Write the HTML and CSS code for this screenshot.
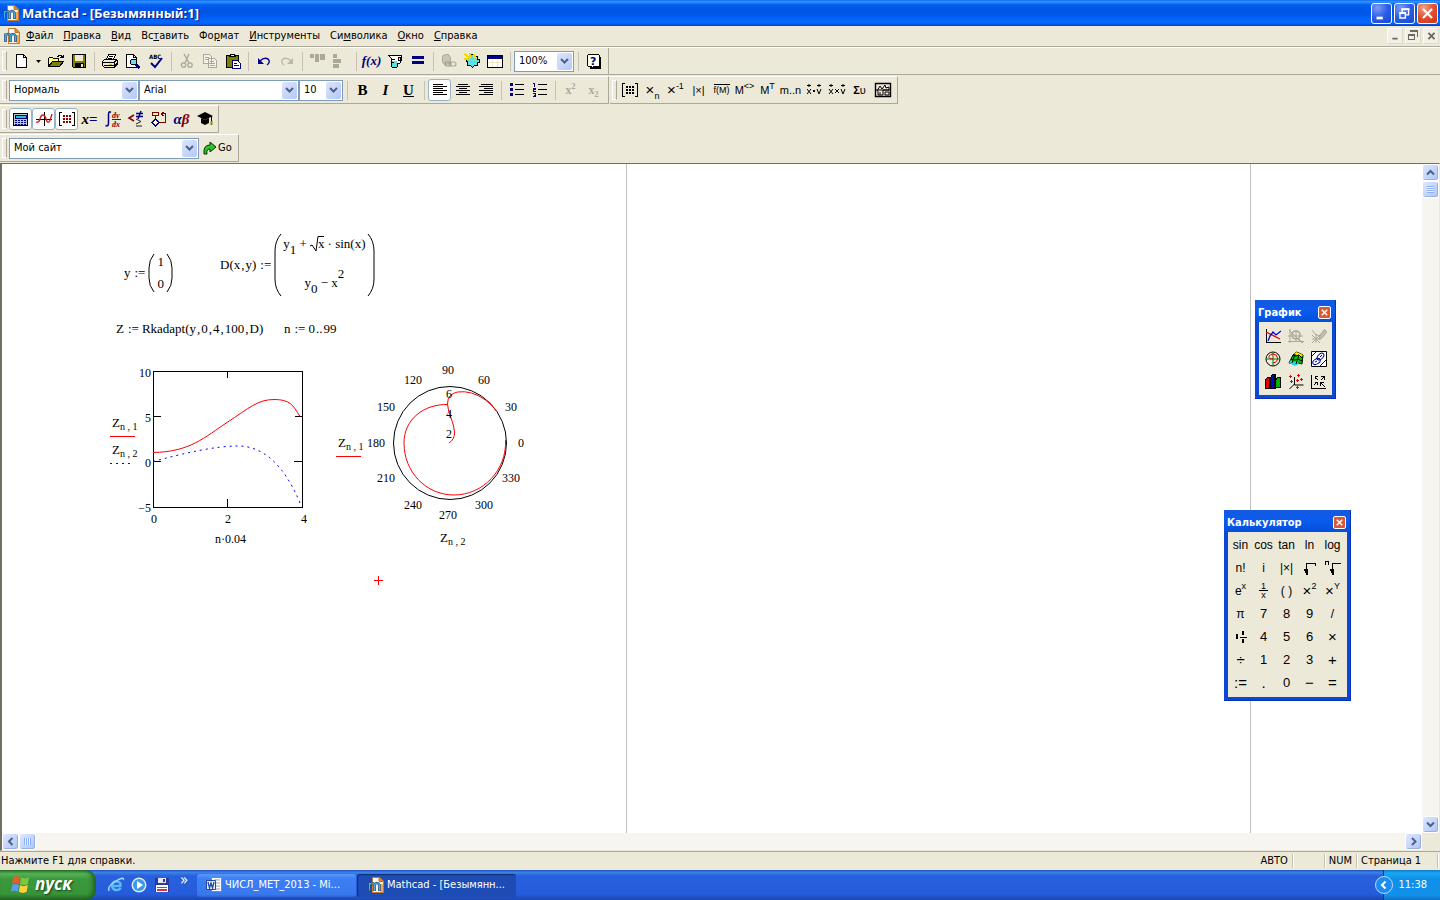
FILE: index.html
```html
<!DOCTYPE html>
<html lang="ru">
<head>
<meta charset="utf-8">
<title>Mathcad - [Безымянный:1]</title>
<link rel="stylesheet" href="styles.css">
</head>
<body>
<svg class="defs" aria-hidden="true">
  <defs>
    <symbol id="mc" viewBox="0 0 16 16">
      <path d="M4.500.5h7l4 3.500v11.500h-11z" fill="#fdf0dc" stroke="#c87830"/>
      <path d="M6 2h5v3H6z" fill="#fff"/>
      <path d="M11 .5v4h4.500z" fill="#f08a28" stroke="#d07018"/>
      <path d="M12.500 7v8h2.500V7z" fill="#f4a850"/>
      <path d="M1.500 14V5.500M1.500 8q1-2 2.500-2t2.500 2v6M6.500 8q1-2 2.500-2t2.500 2v6" fill="none" stroke="#1c4878" stroke-width="2.600"/>
      <path d="M1.500 13.500V6M1.500 8q1-2 2.500-2t2.500 2v5.500M6.500 8q1-2 2.500-2t2.500 2v5.500" fill="none" stroke="#44b0e4" stroke-width="1.200"/>
    </symbol>
    <symbol id="down" viewBox="0 0 9 6"><path d="M1 1l3.500 3.500L8 1" fill="none" stroke="#4d6185" stroke-width="2"/></symbol>
  </defs>
</svg>

<header class="titlebar">
  <svg class="ico"><use href="#mc"/></svg>
  <h1>Mathcad - [Безымянный:1]</h1>
  <div class="winbtns">
    <button class="wb" aria-label="Свернуть"><svg viewBox="0 0 21 21"><path d="M5 14h7v3H5z" fill="#fff"/></svg></button>
    <button class="wb" aria-label="Восстановить"><svg viewBox="0 0 21 21"><path d="M8 9V5.500h7V12h-3M5.500 9.500h6v6h-6z" fill="none" stroke="#fff" stroke-width="1.500"/><path d="M7 5h9v2H7zM5 9h7v2H5z" fill="#fff"/></svg></button>
    <button class="wb red-btn" aria-label="Закрыть"><svg viewBox="0 0 21 21"><path d="M5.500 5.500l10 10M15.500 5.500l-10 10" stroke="#fff" stroke-width="2.400"/></svg></button>
  </div>
</header>

<nav class="menubar">
  <svg class="ico"><use href="#mc"/></svg>
  <button><u>Ф</u>айл</button><button><u>П</u>равка</button><button><u>В</u>ид</button><button>Вс<u>т</u>авить</button><button>Фо<u>р</u>мат</button><button><u>И</u>нструменты</button><button>Си<u>м</u>волика</button><button><u>О</u>кно</button><button><u>С</u>правка</button>
  <div class="mdi">
    <button aria-label="Свернуть окно"><svg viewBox="0 0 16 16"><path d="M5 10h6v2H5z" fill="#6b685c"/></svg></button>
    <button aria-label="Восстановить окно"><svg viewBox="0 0 14 14"><path d="M4 1h8v2H4zM11 3h1v5h-1zM2 5h7v2H2zM2 7h1v4H2zM8 7h1v4H8zM2 10h7v1H2z" fill="#6b685c"/></svg></button>
    <button aria-label="Закрыть окно"><svg viewBox="0 0 16 16"><path d="M5 4.500l7 7M12 4.500l-7 7" stroke="#6b685c" stroke-width="2.200"/></svg></button>
  </div>
</nav>

<section class="bars">
  <div class="row first">
    <div class="bar" role="toolbar" aria-label="Стандартная">
      <button class="tb" aria-label="Создать"><svg class="px" viewBox="0 0 16 16"><path d="M3.500 1.500h7l3 3v10h-10z" fill="#fff" stroke="#000"/><path d="M10.500 1.500v3h3" fill="none" stroke="#000"/></svg></button>
      <button class="tb slim" aria-label="Шаблоны"><svg viewBox="0 0 5 3"><path d="M0 0h5L2.500 3z"/></svg></button>
      <button class="tb" aria-label="Открыть"><svg class="px" viewBox="0 0 16 16"><path d="M.5 13.500V5.500l1-1h3l1 1h5v3" fill="#ffff90" stroke="#000"/><path d="M.5 13.500l4-5h11l-4 5z" fill="#808000" stroke="#000"/><path d="M9 3h1V2h3v1h1v1h1V2M12 4h3" fill="none" stroke="#000"/></svg></button>
      <button class="tb" aria-label="Сохранить"><svg class="px" viewBox="0 0 16 16"><path d="M1.500 1.500h13v13h-12l-1-1z" fill="#808000" stroke="#000"/><path d="M4 2h8v6H4z" fill="#ece9d8"/><path d="M4 10h9v4H4z"/><path d="M10 11h2v3h-2z" fill="#ece9d8"/></svg></button>
      <i class="sep"></i>
      <button class="tb" aria-label="Печать"><svg class="px" viewBox="0 0 16 16"><path d="M4.500 6.500l2-5h7l-2 5" fill="#fff" stroke="#000"/><path d="M7 3.500h4M6 5.500h4" stroke="#000"/><path d="M.5 8.500l2-2h11l2 1v4l-3 3h-10l-2-2z" fill="#ece9d8" stroke="#000"/><path d="M1 9.500h11v4M2 12h10M12 9l3-2M12.500 13l3-3" fill="none" stroke="#000"/><path d="M7 10.500h3v1H7z" fill="#c8c000"/></svg></button>
      <button class="tb" aria-label="Просмотр"><svg class="px" viewBox="0 0 16 16"><path d="M1.500 1.500h7l3 3v10h-10z" fill="#fff" stroke="#000"/><path d="M8.500 1.500v3h3" fill="none" stroke="#000"/><circle cx="8.500" cy="9" r="3" fill="#70e0e8" stroke="#000"/><path d="M10.500 11l4 4" stroke="#000080" stroke-width="2.500"/></svg></button>
      <button class="tb" aria-label="Орфография"><svg viewBox="0 0 16 16"><text x="1" y="6" class="abc">ABC</text><path d="M3 10l4 4 7-9" fill="none" stroke="#000090" stroke-width="2"/></svg></button>
      <i class="sep"></i>
      <button class="tb" aria-label="Вырезать"><svg viewBox="0 0 16 16"><path d="M5 1l5 9M10 1L6 10" fill="none" stroke="#aca899" stroke-width="1.400"/><circle cx="4.500" cy="12" r="2.200" fill="none" stroke="#aca899" stroke-width="1.300"/><circle cx="11" cy="12" r="2.200" fill="none" stroke="#aca899" stroke-width="1.300"/></svg></button>
      <button class="tb" aria-label="Копировать"><svg class="px" viewBox="0 0 16 16"><path d="M1.500 1.500h6l2 2v7h-8zM6.500 5.500h6l2 2v7h-8z" fill="#f4f2e8" stroke="#aca899"/><path d="M3 4.500h4M3 6.500h3M8 8.500h4M8 10.500h5M8 12.500h5" stroke="#aca899"/></svg></button>
      <button class="tb" aria-label="Вставить"><svg class="px" viewBox="0 0 16 16"><path d="M1.500 2.500h12v12h-12z" fill="#808000" stroke="#000"/><path d="M4.500 3.500l1-2h4l1 2z" fill="#ffff60" stroke="#000"/><path d="M7.500 7.500h5l3 3v5h-8z" fill="#fff" stroke="#000080"/><path d="M9 10.500h3M9 12.500h5" stroke="#000080"/></svg></button>
      <i class="sep"></i>
      <button class="tb" aria-label="Отменить"><svg viewBox="0 0 16 16"><path d="M4 8q4-4 8-2 3 3-1 6" fill="none" stroke="#000090" stroke-width="1.400"/><path d="M2 5v6h6z" fill="#000090"/></svg></button>
      <button class="tb" aria-label="Повторить"><svg viewBox="0 0 16 16"><path d="M12 8q-4-4-8-2-3 3 1 6" fill="none" stroke="#bcb8a8" stroke-width="1.400"/><path d="M14 5v6H8z" fill="#bcb8a8"/></svg></button>
      <i class="sep"></i>
      <button class="tb" aria-label="Выровнять по горизонтали"><svg class="px" viewBox="0 0 16 16"><path d="M0 1h4v4H0zM5 1h4v8H5zM10 1h5v6h-5z" fill="#aca899"/></svg></button>
      <button class="tb" aria-label="Выровнять по вертикали"><svg class="px" viewBox="0 0 16 16"><path d="M0 1h4v4H0zM0 6h8v4H0zM0 11h6v4H0z" fill="#aca899"/></svg></button>
      <i class="sep"></i>
      <button class="tb fx">f(x)</button>
      <button class="tb" aria-label="Единицы"><svg class="px" viewBox="0 0 16 16"><path d="M1.500 2.500h13v5l-2 3h-2v3l-1 1h-4l-1-1v-8z" fill="#fff" stroke="#000"/><path d="M5 8h5v6H5z" fill="#60dce4"/><path d="M11 4.500h2v3h-2z" fill="#ece9d8" stroke="#000"/><path d="M5 6.500h3M5 9.500h2" stroke="#000"/></svg></button>
      <button class="tb" aria-label="Вычислить"><svg class="px" viewBox="0 0 16 16"><path d="M2 3h12v3H2zM2 8h12v3H2z" fill="#000080"/></svg></button>
      <i class="sep"></i>
      <button class="tb" aria-label="Гиперссылка"><svg viewBox="0 0 16 16"><path d="M1.500 9V3l3-1.500h3l2 3v6l-6 1z" fill="#c8c5b6" stroke="#aca899"/><rect x="4" y="9" width="6" height="4" rx="2" fill="none" stroke="#9c988a" stroke-width="1.200"/><rect x="8" y="9" width="7" height="4" rx="2" fill="none" stroke="#aca899" stroke-width="1.200"/></svg></button>
      <button class="tb" aria-label="Компонент"><svg class="px" viewBox="0 0 16 16"><path d="M3.500 3.500h3V1.500h4v2h3v3h2v3h-2v3h-3l-2 2-2-2h-3v-3l-1-2z" fill="#60e0e0" stroke="#000"/><path d="M1 1l5 5M6 0v5M0 6h5M10 1v3l3 1" stroke="#f0d800" stroke-width="2" fill="none"/></svg></button>
      <button class="tb" aria-label="Окно формул"><svg class="px" viewBox="0 0 16 16"><path d="M.5 2.500h15v12H.5z" fill="#fff" stroke="#000"/><path d="M1 3h14v3H1z" fill="#000080"/><path d="M5.500 7v7M10.500 7v7M2 9.500h12" stroke="#f0e4b8"/></svg></button>
      <i class="sep"></i>
      <div class="combo w60"><input aria-label="Масштаб" value="100%"><button aria-label="Список масштабов"><svg><use href="#down"/></svg></button></div>
      <i class="sep"></i>
      <button class="tb" aria-label="Справка"><svg class="px" viewBox="0 0 16 16"><path d="M4 15h10V4" fill="none" stroke="#000" stroke-width="2"/><path d="M1.500 2.500l1-1h10l1 1v11h-6l-2 2v-2h-3l-1-1z" fill="#fffff0" stroke="#000"/><text x="4" y="12" class="q">?</text></svg></button>
    </div>
  </div>

  <div class="row second">
    <div class="bar" role="toolbar" aria-label="Форматирование">
      <div class="combo w130"><input aria-label="Стиль" value="Нормаль"><button aria-label="Список стилей"><svg><use href="#down"/></svg></button></div>
      <div class="combo w160"><input aria-label="Шрифт" value="Arial"><button aria-label="Список шрифтов"><svg><use href="#down"/></svg></button></div>
      <div class="combo w44"><input aria-label="Размер" value="10"><button aria-label="Список размеров"><svg><use href="#down"/></svg></button></div>
      <i class="sep"></i>
      <button class="tb serif"><b>B</b></button>
      <button class="tb serif"><b><em>I</em></b></button>
      <button class="tb serif"><b><u>U</u></b></button>
      <i class="sep"></i>
      <button class="tb on" aria-label="По левому краю"><svg class="px" viewBox="0 0 16 16"><path d="M1 2.500h10M1 4.500h14M1 6.500h10M1 8.500h14M1 10.500h10M1 12.500h14" stroke="#000"/></svg></button>
      <button class="tb" aria-label="По центру"><svg class="px" viewBox="0 0 16 16"><path d="M3 2.500h10M1 4.500h14M4 6.500h8M1 8.500h14M4 10.500h8M1 12.500h14" stroke="#000"/></svg></button>
      <button class="tb" aria-label="По правому краю"><svg class="px" viewBox="0 0 16 16"><path d="M3 2.500h12M1 4.500h14M6 6.500h9M1 8.500h14M6 10.500h9M1 12.500h14" stroke="#000"/></svg></button>
      <i class="sep"></i>
      <button class="tb" aria-label="Маркеры"><svg class="px" viewBox="0 0 16 16"><path d="M1 1h3v3H1zM1 6h3v3H1zM1 11h3v3H1z" fill="#000080"/><path d="M6 2.500h9M6 7.500h9M6 12.500h9" stroke="#000"/></svg></button>
      <button class="tb" aria-label="Нумерация"><svg class="px" viewBox="0 0 16 16"><path d="M1 1.500h1.500V5M1 6.500h2v1H1.500v1.500H4M1 11.500h2v3H1M1.500 13H3" fill="none" stroke="#000080"/><path d="M6 2.500h9M6 7.500h9M6 12.500h9" stroke="#000"/></svg></button>
      <i class="sep"></i>
      <button class="tb serif dim"><b>x<sup>2</sup></b></button>
      <button class="tb serif dim"><b>x<sub>2</sub></b></button>
    </div>
    <div class="bar matrix" role="toolbar" aria-label="Матрица">
      <button class="tb" aria-label="Матрица"><svg class="px" viewBox="0 0 16 16"><path d="M3 1.500H.5v13H3M13 1.500h2.500v13H13" fill="none" stroke="#000"/><path d="M4 4h2v2H4zM7 4h2v2H7zM10 4h2v2h-2zM4 7h2v2H4zM7 7h2v2H7zM10 7h2v2h-2zM4 10h2v2H4zM7 10h2v2H7zM10 10h2v2h-2z"/></svg></button>
      <button class="tb sm"><span class="x">×<sub>n</sub></span></button>
      <button class="tb sm"><span class="x">×<sup>-1</sup></span></button>
      <button class="tb sm"><span>|×|</span></button>
      <button class="tb sm"><span class="vec">f(M)</span></button>
      <button class="tb sm"><span>M<sup>&lt;&gt;</sup></span></button>
      <button class="tb sm"><span>M<sup>T</sup></span></button>
      <button class="tb sm">m..n</button>
      <button class="tb sm" aria-label="Скалярное произведение"><svg viewBox="0 0 16 16"><path d="M1 3.500h4M3 2v3M11 3.500h4M13 2v3M1 7l4 5M5 7l-4 5M11 7l2 5 2-5" fill="none" stroke="#000"/><path d="M7 8h2v2H7z"/></svg></button>
      <button class="tb sm" aria-label="Векторное произведение"><svg viewBox="0 0 16 16"><path d="M0 3.500h4M2 2v3M12 3.500h4M14 2v3M0 7l4 5M4 7l-4 5M12 7l2 5 2-5M6 7l4 4M10 7l-4 4" fill="none" stroke="#000"/></svg></button>
      <button class="tb sm"><b>Σ</b>υ</button>
      <button class="tb" aria-label="Изображение"><svg viewBox="0 0 16 16"><path d="M.5 1.500h15v13H.5z" fill="#f6e8e0" stroke="#000" stroke-width="1.400"/><path d="M2 9l3-5 2 3 3-4 1 3 3-1v3H8v5H3V9M10 10h4v3h-4zM5 10v3M1 8h14" fill="none" stroke="#000"/></svg></button>
    </div>
  </div>

  <div class="row">
    <div class="bar" role="toolbar" aria-label="Математика">
      <button class="tb on" aria-label="Калькулятор"><svg class="px" viewBox="0 0 16 16"><path d="M.5 2.500h14v12H.5z" fill="#b8c8d8" stroke="#000" stroke-width="1.500"/><path d="M2 4h11v3H2z" fill="#28c0c8" stroke="#000080"/><path d="M2 9.500h12M2 11.500h12M2 13.500h12" stroke="#000080" stroke-dasharray="2 1"/></svg></button>
      <button class="tb on" aria-label="График"><svg viewBox="0 0 16 16"><path d="M8.500 1v14M0 8.500h16" stroke="#000"/><path d="M0 11q3 1 4-3t3-4q2 0 3 4t3 3q1-1 3-8" fill="none" stroke="#e01010" stroke-width="1.300"/></svg></button>
      <button class="tb on" aria-label="Матрицы"><svg class="px" viewBox="0 0 16 16"><path d="M3 1.500H.5v13H3M13 1.500h2.500v13H13" fill="none" stroke="#000"/><path d="M4 4h2v2H4zM7 4h2v2H7zM10 4h2v2h-2zM4 7h2v2H4zM7 7h2v2H7zM10 7h2v2h-2zM4 10h2v2H4zM7 10h2v2H7zM10 10h2v2h-2z" fill="#800000"/></svg></button>
      <button class="tb serif eqn"><b><em>x</em><span>=</span></b></button>
      <button class="tb" aria-label="Исчисление"><svg viewBox="0 0 16 16"><path d="M6 1.500Q3.500-.5 3.500 4v8q0 4-3 2.500" fill="none" stroke="#000080" stroke-width="1.500"/><text x="7" y="7" class="dd">dy</text><path d="M7 8.500h9" stroke="#800000"/><text x="7" y="16" class="dd">dx</text></svg></button>
      <button class="tb" aria-label="Булева"><svg viewBox="0 0 16 16"><path d="M6 4L1 7l5 3" fill="none" stroke="#800000" stroke-width="1.500"/><path d="M8 2.500h7M8 5.500h7M13 0l-3 8" stroke="#000080" stroke-width="1.500"/><path d="M8 8l5 2.500L8 13M8 15h6" fill="none" stroke="#222"/></svg></button>
      <button class="tb" aria-label="Программирование"><svg class="px" viewBox="0 0 16 16"><path d="M1.500 1.500h6v3h-6z" fill="#fff8a0" stroke="#800000"/><path d="M4.500 5v3M8 11.500h6.500v-9H11M13 1l-3 2 3 2" fill="none" stroke="#800000"/><path d="M4.500 8l3.500 3.500L4.500 15 1 11.500z" fill="#ffffb0" stroke="#000080"/></svg></button>
      <button class="tb serif greek"><b><em><span>α</span>β</em></b></button>
      <button class="tb" aria-label="Символы"><svg viewBox="0 0 16 16"><path d="M0 5l8-4 8 4-8 4z"/><path d="M4 7v5l4 2 4-2V7L8 9z"/><path d="M14.500 5v6" stroke="#000"/><path d="M13.500 10h2v4h-2z" fill="#908800"/></svg></button>
    </div>
  </div>

  <div class="row">
    <div class="bar" role="toolbar" aria-label="Ресурсы">
      <div class="combo w190"><input aria-label="Адрес" value="Мой сайт"><button aria-label="Список адресов"><svg><use href="#down"/></svg></button></div>
      <button class="go"><svg class="ico14" viewBox="0 0 14 14"><path d="M1 13Q0 4 7 4V1l6 5-6 5V8Q3 8 4 13z" fill="#28c828" stroke="#083008"/></svg>Go</button>
    </div>
  </div>
</section>

<main class="work">
  <div class="sheet">
    <div class="pagebreak one"></div>
    <div class="pagebreak two"></div>

    <div class="math m-y">
      <span>y</span><span class="def">:=</span>
      <svg class="par" width="7" height="38"><path d="M6 0Q1 6 1 14v10q0 8 5 14"/></svg>
      <span class="col"><span>1</span><span>0</span></span>
      <svg class="par" width="7" height="38"><path d="M1 0q5 6 5 14v10q0 8-5 14"/></svg>
    </div>

    <div class="math m-d">
      <span>D(x<i class="c">,</i>y)</span><span class="def">:=</span>
      <svg class="par" width="8" height="62"><path d="M7 0Q1 7 1 17v28q0 10 6 17"/></svg>
      <span class="col big">
        <span>y<sub>1</sub> + <svg class="root" width="14" height="16"><path d="M0 10l2-1 4 6L8 .5h6" /></svg><i class="rad">x</i>· sin(x)</span>
        <span>y<sub>0</sub> − x<sup>2</sup></span>
      </span>
      <svg class="par" width="8" height="62"><path d="M1 0q6 7 6 17v28q0 10-6 17"/></svg>
    </div>

    <div class="math m-z"><span>Z</span><span class="def">:=</span><span>Rkadapt(y<i class="c">,</i>0<i class="c">,</i>4<i class="c">,</i>100<i class="c">,</i>D)</span></div>
    <div class="math m-n"><span>n</span><span class="def">:=</span><span>0<i class="c">..</i>99</span></div>

    <svg class="plot xy" viewBox="106 364 210 190" role="img" aria-label="График Z">
      <path class="frame px" d="M153.500 371.500h149v136h-149z"/>
      <path class="frame px" d="M227.500 371v7M227.500 507v-8M153 416.500h8M303 416.500h-8M153 461.500h8M303 461.500h-9"/>
      <path class="red" d="M153 452.500C190 452 205 437 227 422.500S258 399.500 274 399.500S293 405 300 416.500"/>
      <path class="blue" d="M153 461.500C185 453 215 446 238 446S283 462 300 503"/>
      <text x="151" y="377" text-anchor="end">10</text>
      <text x="151" y="422" text-anchor="end">5</text>
      <text x="151" y="467" text-anchor="end">0</text>
      <text x="151" y="512" text-anchor="end">−5</text>
      <text x="151" y="523">0</text>
      <text x="225" y="523">2</text>
      <text x="301" y="523">4</text>
      <text x="215" y="543">n·0.04</text>
      <text class="z" x="112" y="427">Z<tspan class="sub" dy="3">n , 1</tspan></text>
      <path class="red px" d="M110 436.500h25"/>
      <text class="z" x="112" y="454">Z<tspan class="sub" dy="3">n , 2</tspan></text>
      <path class="blue px" d="M110 463.500h21"/>
    </svg>

    <svg class="plot polar" viewBox="334 360 200 194" role="img" aria-label="Полярный график">
      <circle class="frame" cx="450" cy="443" r="56.500"/>
      <path class="red" d="M449 443q6-4 5.500-11t-3.500-14-3.500-14q0-10 10-12 14-2 28 8 6 4 11 11M505.500 440C507 470 483 495 454 495C426 495 404 472 404 443C404 419 424 404 448 404.500"/>
      <text x="448" y="374" text-anchor="middle">90</text>
      <text x="484" y="384" text-anchor="middle">60</text>
      <text x="511" y="411" text-anchor="middle">30</text>
      <text x="521" y="447" text-anchor="middle">0</text>
      <text x="511" y="482" text-anchor="middle">330</text>
      <text x="484" y="509" text-anchor="middle">300</text>
      <text x="448" y="519" text-anchor="middle">270</text>
      <text x="413" y="509" text-anchor="middle">240</text>
      <text x="386" y="482" text-anchor="middle">210</text>
      <text x="376" y="447" text-anchor="middle">180</text>
      <text x="386" y="411" text-anchor="middle">150</text>
      <text x="413" y="384" text-anchor="middle">120</text>
      <text x="449" y="398" text-anchor="middle">6</text>
      <text x="449" y="418" text-anchor="middle">4</text>
      <text x="449" y="438" text-anchor="middle">2</text>
      <text class="z" x="338" y="447">Z<tspan class="sub" dy="3">n , 1</tspan></text>
      <path class="red px" d="M336 456.500h25"/>
      <text class="z" x="440" y="542">Z<tspan class="sub" dy="3">n , 2</tspan></text>
    </svg>

    <svg class="cross px" viewBox="0 0 9 9"><path d="M4.500 0v9M0 4.500h9" stroke="#f00"/></svg>
  </div>
  <div class="vscroll">
    <button aria-label="Вверх"><svg viewBox="0 0 9 6"><path d="M1 5l3.500-3.500L8 5" fill="none" stroke="#4d6185" stroke-width="2"/></svg></button>
    <span class="thumb"></span>
    <button class="end" aria-label="Вниз"><svg viewBox="0 0 9 6"><use href="#down"/></svg></button>
  </div>
  <div class="hscroll">
    <button aria-label="Влево"><svg viewBox="0 0 9 9"><path d="M6.500 1L3 4.500 6.500 8" fill="none" stroke="#4d6185" stroke-width="2"/></svg></button>
    <span class="thumb"></span>
    <button class="end" aria-label="Вправо"><svg viewBox="0 0 9 9"><path d="M3 1l3.500 3.500L3 8" fill="none" stroke="#4d6185" stroke-width="2"/></svg></button>
  </div>
  <div class="corner"></div>
</main>

<section class="palette graph" aria-label="График">
  <div class="ptitle"><h2>График</h2><button aria-label="Закрыть График"><svg viewBox="0 0 9 9"><path d="M1 1l7 7M8 1L1 8" stroke="#fff" stroke-width="2"/></svg></button></div>
  <div class="pgrid three">
    <button aria-label="X-Y"><svg viewBox="0 0 16 16"><path d="M1.500 1v13.500M1 14.500h15" stroke="#000"/><path d="M1 4l14 7" stroke="#e00000" stroke-width="1.300"/><path d="M3 13l2-5 3-4 3 3 5-4" fill="none" stroke="#0000e0" stroke-width="1.300"/></svg></button>
    <button aria-label="Масштаб графика"><svg viewBox="0 0 16 16"><path d="M2 1v14M0 13.500h16M0 8h15M8 2v12M1 2l13 13M10 10l5 5" stroke="#aca899"/><circle cx="8" cy="7" r="4" fill="none" stroke="#aca899" stroke-width="1.600"/></svg></button>
    <button aria-label="Трассировка"><svg viewBox="0 0 16 16"><path d="M1 11h9M5 6v9M1 7l8 8M9 7l-8 8M1 2l3 4 4 2 6-7" fill="none" stroke="#aca899"/><path d="M9 8l5-6 2 2-5 6-3 1z" fill="#c4c0b2" stroke="#aca899"/></svg></button>
    <button aria-label="Полярный"><svg viewBox="0 0 16 16"><circle cx="8" cy="8" r="7" fill="none" stroke="#000"/><path d="M8 1v14M1 8h14" stroke="#008000"/><path d="M8 8Q3 8 4 5.500T8 3q4 0 4.500 4T8 12" fill="none" stroke="#e00000"/></svg></button>
    <button aria-label="Поверхность"><svg viewBox="0 0 16 16"><path d="M5 4l3-3 3 1 4 2-1 9-4-1-4 1-5-1 2-4z" fill="#00c800" stroke="#000"/><path d="M6 3l2-2 3 1 4 2-2 2-3-1z" fill="#f8e800"/><path d="M1 12l2-3 3 2 3-1 2 3-4 2z" fill="#20d8e8"/><path d="M5 4l3 1 3-1 3 3M3 8l4 1 3-1 4 2M7 3L4 12M11 4l-3 9" fill="none" stroke="#000"/></svg></button>
    <button aria-label="Контурный"><svg viewBox="0 0 16 16"><path d="M.5.5h15v15H.5z" fill="#fff" stroke="#000"/><g fill="none" stroke="#0000a0"><ellipse cx="9.500" cy="5.500" rx="4" ry="2.500" transform="rotate(-45 9.500 5.500)"/><ellipse cx="5.500" cy="10.500" rx="4" ry="2.500" transform="rotate(-30 5.500 10.500)"/><path d="M9 6l2-2M4 11l2-1M1 5l4-4M9 15l6-6"/></g></svg></button>
    <button aria-label="Столбчатый"><svg class="px" viewBox="0 0 16 16"><path d="M.5 5.500l2-2h3v11h-5z" fill="#e80000" stroke="#000"/><path d="M5.500 3.500l2-3h3v14h-5z" fill="#0000d8" stroke="#000"/><path d="M10.500 6.500l2-3h3v10h-5z" fill="#00b000" stroke="#000"/><path d="M4 4h1v11H4zM9 1h1v14H9z"/></svg></button>
    <button aria-label="Точечный"><svg viewBox="0 0 16 16"><path d="M6.500 3v8h9M6.500 10l-5 5" fill="none" stroke="#000"/><path d="M2.500 1v3M1 2.500h3M10.500 0v3M9 1.500h3M13.500 4v3M12 5.500h3M3.500 6v3M2 7.500h3M9.500 12v3M8 13.500h3M9.500 5v3M8 6.500h3" stroke="#f00000"/></svg></button>
    <button aria-label="Векторное поле"><svg class="px" viewBox="0 0 16 16"><path d="M.5 1v13.500H15M4 3l3 3M4 5V2.500h3M13 3l-3 3M10 2.500h3.500V6M6 8l-3 3M4 8.500h2.500V11M10 9l4 4M9.500 12V8.500H13" fill="none" stroke="#000"/></svg></button>
  </div>
</section>

<section class="palette calc" aria-label="Калькулятор">
  <div class="ptitle"><h2>Калькулятор</h2><button aria-label="Закрыть Калькулятор"><svg viewBox="0 0 9 9"><path d="M1 1l7 7M8 1L1 8" stroke="#fff" stroke-width="2"/></svg></button></div>
  <div class="pgrid five">
    <button>sin</button><button>cos</button><button>tan</button><button>ln</button><button>log</button>
    <button>n!</button><button>i</button><button>|×|</button>
    <button aria-label="Корень"><svg class="px" viewBox="0 0 16 16"><path d="M2 9h3v5H4v-2H3v-2H2zM4.500 14V3.500H13V6" fill="none" stroke="#000"/></svg></button>
    <button aria-label="Корень n"><svg class="px" viewBox="0 0 16 16"><path d="M.5 5V1.500h3V5M5 9h3v5H7v-2H6v-2H5zM7.500 14V3.500H16V6" fill="none" stroke="#000"/></svg></button>
    <button>e<sup>x</sup></button>
    <button class="frac"><span>1</span><span>x</span></button>
    <button>( )</button><button class="op">×<sup>2</sup></button><button class="op">×<sup>Y</sup></button>
    <button>π</button><button class="d">7</button><button class="d">8</button><button class="d">9</button><button>/</button>
    <button aria-label="Смешанная дробь"><svg class="px" viewBox="0 0 16 16"><path d="M3 5h2v5H3zM9 2h2v4H9zM9 10h2v4H9zM7 8h7v1H7z"/></svg></button>
    <button class="d">4</button><button class="d">5</button><button class="d">6</button><button class="op">×</button>
    <button class="op">÷</button><button class="d">1</button><button class="d">2</button><button class="d">3</button><button class="op">+</button>
    <button class="op">:=</button><button class="op">.</button><button class="d">0</button><button class="op">−</button><button class="op">=</button>
  </div>
</section>

<footer class="status">
  <span class="hint">Нажмите F1 для справки.</span>
  <span class="cell">АВТО</span><span class="cell blank"></span><span class="cell">NUM</span><span class="cell page">Страница 1</span>
</footer>

<nav class="taskbar">
  <button class="start"><svg viewBox="0 0 18 18"><path d="M3 3q3-2 6 0L8 9q-3-2-6 0z" fill="#f0582c"/><path d="M10 3q3 2 7 0l-1 6q-3 2-7 0z" fill="#7cc83c"/><path d="M2 10q3-2 6 0l-1 6q-3-2-6 0z" fill="#5c9cf0"/><path d="M9 10q3 2 7 0l-1 6q-3 2-7 0z" fill="#fcd03c"/></svg>пуск</button>
  <div class="quick">
    <button aria-label="Internet Explorer"><svg viewBox="0 0 16 16"><path d="M3.500 9h9Q13 4.500 8.500 4.500T4 9q.5 4 4.500 4 3 0 4-2" fill="none" stroke="#58b8f8" stroke-width="2.500"/><path d="M1 14Q-1 9 8 4t7-1" fill="none" stroke="#a8dcff" stroke-width="1.400"/></svg></button>
    <button aria-label="Проигрыватель"><svg viewBox="0 0 16 16"><circle cx="8" cy="8" r="7.500" fill="#dce8f4"/><circle cx="8" cy="8" r="6" fill="#3c98e8"/><path d="M6 4l6 4-6 4z" fill="#fff"/></svg></button>
    <button aria-label="Total Commander"><svg class="px" viewBox="0 0 16 16"><path d="M1 1h14v14H1z" fill="#2838a0"/><path d="M4 1h8v5H4z" fill="#e8e8f4"/><path d="M9 2h2v3H9z" fill="#2838a0"/><path d="M2 8h12v7H2z" fill="#fff"/><path d="M3 10.500h10M3 13h10" stroke="#e03030" stroke-width="1.500"/></svg></button>
    <button class="more">»</button>
  </div>
  <button class="task"><svg viewBox="0 0 16 16"><path d="M5.500.5h10v14h-10z" fill="#fff" stroke="#6c88b8"/><path d="M8 3h6M10 6h4M10 9h4M8 12h6" stroke="#8c9cc0"/><path d="M.5 3.500h9v9h-9z" fill="#e8f0fc" stroke="#2048a0"/><path d="M2 5l1.500 6L5 6l1.500 5L8 5" fill="none" stroke="#2048a0" stroke-width="1.300"/></svg><span>ЧИСЛ_МЕТ_2013 - Mi...</span></button>
  <button class="task active"><svg><use href="#mc"/></svg><span>Mathcad - [Безымянн...</span></button>
  <div class="tray"><button aria-label="Показать значки"><svg viewBox="0 0 18 18"><circle cx="9" cy="9" r="8.500" fill="#1c8cf0" stroke="#b8dcfc"/><path d="M10.500 5.500L7 9l3.500 3.500" fill="none" stroke="#fff" stroke-width="2"/></svg></button><time>11:38</time></div>
</nav>
</body>
</html>
```
FILE: styles.css
```css
* { box-sizing: border-box; }
html, body { height: 100%; margin: 0; }
body {
  display: flex; flex-direction: column; position: relative; overflow: hidden;
  background: #ece9d8; color: #000;
  font: 11px/14px "DejaVu Sans Condensed", "Liberation Sans", sans-serif;
}
button { font: inherit; color: inherit; background: none; border: 0; padding: 0; margin: 0; }
h1, h2 { margin: 0; }
svg { display: block; flex: none; }
.defs { position: absolute; width: 0; height: 0; }
.px { shape-rendering: crispEdges; }
.ico { width: 16px; height: 16px; }

.titlebar {
  display: flex; align-items: center; gap: 3px; flex: none; height: 26px; padding: 0 2px 0 3px; color: #fff;
  background: linear-gradient(#0058ee 0, #3593ff 4%, #288eff 8%, #0360f0 18%, #0055e5 35%, #0058e8 55%, #0265fc 75%, #0668ff 88%, #0a4fd8 96%, #003dc0 100%);
}
.titlebar h1 { font: bold 13px/18px "Noto Sans", sans-serif; text-shadow: 1px 1px 1px #0a1883; }
.winbtns { display: flex; gap: 2px; margin-left: auto; }
.wb { width: 21px; height: 21px; border: 1px solid #fff; border-radius: 3px; background: radial-gradient(circle at 30% 20%, #7c9cf4, #2c5ce8 50%, #1848d0); }
.wb.red-btn { background: radial-gradient(circle at 30% 20%, #f0a088, #e05030 50%, #c83810); }
.wb svg { width: 19px; height: 19px; }

.menubar { display: flex; align-items: center; flex: none; height: 20px; padding: 0 1px 0 4px; }
.menubar > button { margin: 0 0 0 10px; white-space: nowrap; }
.menubar > .ico + button { margin-left: 6px; }
.mdi { display: flex; gap: 2px; margin-left: auto; }
.mdi button { width: 16px; height: 16px; background: #f2f0e6; border: 1px solid #fbfaf4; border-right-color: #dedbcb; border-bottom-color: #dedbcb; }
.mdi svg { width: 14px; height: 14px; }

.bars { flex: none; border-top: 1px solid #aca899; }
.row { display: flex; margin-bottom: 1px; height: 28px; }
.row.first { border-bottom: 1px solid #aca899; border-top: 1px solid #fff; }
.bar { display: flex; align-items: center; position: relative; padding: 0 2px 0 9px; border-right: 1px solid #aca899; border-bottom: 1px solid #aca899; border-top: 1px solid #fff; }
.row.first .bar, .row.second .bar { padding-right: 3px; }
.row.first .bar { border-top: 0; border-bottom: 0; }
.bar::before { content: ""; position: absolute; left: 2px; top: 3px; bottom: 3px; width: 3px; border: 1px solid #fff; border-right-color: #aca899; }
.row.second .bar.matrix { margin-left: 1px; padding: 0 3px 0 8px; }
.tb { display: flex; align-items: center; justify-content: center; flex: none; width: 23px; height: 22px; }
.tb svg { width: 16px; height: 16px; overflow: visible; }
.tb.slim { width: 12px; }
.tb.slim svg { width: 5px; height: 3px; }
.tb.on { background: #fff; border: 1px solid #98b4c8; border-radius: 3px; }
.sep { flex: none; width: 8px; height: 19px; background: linear-gradient(#c5c2b4, #c5c2b4) center / 1px 100% no-repeat; }
.abc { font: bold 6px "DejaVu Sans Condensed", sans-serif; }
.q { font: bold 11px "DejaVu Sans", sans-serif; fill: #000080; }
.dd { font: italic bold 8px "Liberation Serif", serif; fill: #800000; }
.fx { font: italic bold 13px/16px "Liberation Serif", serif; color: #000080; }
.serif { font: 15px/18px "Liberation Serif", serif; }
.serif sup, .serif sub { font-size: 8px; line-height: 1px; }
.dim { color: #aca899; font-size: 12px; }
.eqn span { color: #000080; }
.greek { color: #800000; }
.greek span { color: #000080; }
.sm { font: 11px/14px "Liberation Sans", sans-serif; }
.sm .x { font-size: 15px; }
.sm sup, .sm sub { font-size: 9px; line-height: 1px; }
.sm .vec { border-top: 1px solid #000; line-height: 11px; font-size: 9px; }

.combo { display: flex; flex: none; height: 21px; border: 1px solid #7f9db9; background: #fff; padding: 1px; }
.combo input { flex: 1; min-width: 0; border: 0; padding: 0 3px; background: none; font: inherit; color: inherit; outline: 0; }
.combo button { display: flex; align-items: center; justify-content: center; flex: none; width: 15px; border-radius: 2px; background: linear-gradient(135deg, #dce6fd, #b4c8f6); }
.combo button svg { width: 9px; height: 6px; }
.w44 { width: 44px; } .w60 { width: 60px; } .w130 { width: 130px; } .w160 { width: 160px; } .w190 { width: 190px; }
.go { display: flex; align-items: center; gap: 1px; padding: 0 4px; }
.ico14 { width: 14px; height: 14px; }

.work { flex: 1; min-height: 0; display: grid; grid-template: 1fr 17px / 1fr 17px; border: 1px solid #716f64; border-color: #716f64 #ece9d8 #ece9d8 #716f64; border-left-width: 2px; }
.sheet { position: relative; overflow: hidden; background: #fff; }
.pagebreak { position: absolute; top: 0; bottom: 0; width: 1px; background: #c0c0c0; }
.one { left: 624px; }
.two { left: 1248px; }
.vscroll, .hscroll { display: flex; background: #f6f5f0; }
.vscroll { flex-direction: column; }
.vscroll button, .hscroll button { display: flex; align-items: center; justify-content: center; width: 17px; height: 17px; }
.vscroll button, .hscroll button, .thumb { border: 1px solid #fff; border-radius: 3px; background: linear-gradient(135deg, #dce6fe, #b0c6f8); box-shadow: inset -1px -1px 0 #98b0e0; }
.vscroll svg, .hscroll svg { width: 9px; height: 9px; }
.vscroll .end { margin-top: auto; }
.hscroll .end { margin-left: auto; }
.thumb { position: relative; width: 17px; height: 17px; }
.thumb::after { content: ""; position: absolute; inset: 4px; background: repeating-linear-gradient(#8cb0f8 0 1px, #e8f0ff 1px 2px); }
.hscroll .thumb::after { background: repeating-linear-gradient(90deg, #8cb0f8 0 1px, #e8f0ff 1px 2px); }
.corner { background: #ece9d8; }

.math { position: absolute; display: flex; align-items: center; white-space: nowrap; font: 13px/16px "Liberation Serif", serif; }
.math i { font-style: normal; }
.math sub, .math sup { line-height: 1px; font-size: 13px; }
.math sub { vertical-align: -6px; }
.math sup { vertical-align: 9px; }
.c { margin: 0 1px; }
.def { margin: 0 3px 0 4px; }
.par path, .root path { fill: none; stroke: #000; }
.col { display: flex; flex-direction: column; align-items: center; gap: 6px; padding: 0 2px; }
.col.big { gap: 21px; padding: 0 1px 4px; }
.root { display: inline-block; vertical-align: -4px; }
.rad { margin: 0 3px 0 -6px; }
.m-y { left: 122px; top: 90px; }
.m-d { left: 218px; top: 70px; }
.m-z { left: 114px; top: 157px; }
.m-n { left: 282px; top: 157px; }
.plot { position: absolute; font: 12px "Liberation Serif", serif; }
.z { font-size: 13px; }
.xy { left: 104px; top: 200px; width: 210px; height: 190px; }
.polar { left: 332px; top: 196px; width: 200px; height: 194px; }
.frame { fill: none; stroke: #000; }
.red { fill: none; stroke: #f00; }
.blue { fill: none; stroke: #00f; stroke-dasharray: 2 4; }
.sub { font-size: 10px; }
.cross { position: absolute; left: 372px; top: 412px; width: 9px; height: 9px; }

.palette { position: absolute; padding: 0 3px 3px 4px; background: #0a48d8; border: 1px solid #0830b8; border-width: 0 1px 1px 0; }
.graph { left: 1255px; top: 300px; }
.calc { left: 1224px; top: 510px; }
.ptitle { display: flex; align-items: center; justify-content: space-between; height: 22px; margin: 0 -3px 0 -4px; padding: 3px 4px 0 3px; color: #fff; background: linear-gradient(#1458dc, #0c5cf0 40%, #0450dc); }
.ptitle h2 { font-size: 11px; line-height: 14px; }
.ptitle button { display: flex; align-items: center; justify-content: center; width: 13px; height: 13px; border: 1px solid #fff; border-radius: 2px; background: #d85838; }
.ptitle svg { width: 7px; height: 7px; }
.pgrid { display: grid; background: #ece9d8; font: 12px/14px "Liberation Sans", sans-serif; }
.three { grid-template-columns: repeat(3, 23px); grid-auto-rows: 23px; padding: 2px; }
.five { grid-template-columns: repeat(5, 23px); grid-auto-rows: 23px; padding: 1px 3px 3px 1px; }
.pgrid button { display: flex; align-items: center; justify-content: center; }
.pgrid svg { width: 16px; height: 16px; }
.pgrid sup { font-size: 9px; line-height: 9px; align-self: flex-start; margin-top: 3px; }
.pgrid .d { font-size: 13px; }
.pgrid .op { font-size: 15px; }
.pgrid .frac { flex-direction: column; font-size: 9px; line-height: 8px; }
.frac span + span { border-top: 1px solid #000; padding: 0 2px; }

.status { display: flex; align-items: center; flex: none; height: 19px; padding: 0 2px 0 1px; border-top: 1px solid #aca899; }
.hint { flex: 1; }
.cell { padding: 0 4px; border-right: 1px solid #c5c2b4; box-shadow: 1px 0 #fff; }
.blank { width: 32px; height: 14px; }
.page { width: 81px; }

.taskbar {
  display: flex; align-items: center; flex: none; height: 30px; color: #fff;
  background: linear-gradient(#1c50c0 0, #3c80e8 8%, #2860dc 20%, #245cdc 80%, #1c48b0 100%);
}
.start {
  display: flex; align-items: center; gap: 5px; width: 96px; height: 30px; padding: 0 0 2px 10px;
  font: italic bold 17px/20px "Open Sans", "Liberation Sans", sans-serif; text-shadow: 1px 1px 2px #104010;
  border-radius: 0 10px 10px 0; background: linear-gradient(#2c7c2c, #58b458 12%, #3c983c 30%, #389438 80%, #246824); box-shadow: inset -3px 0 4px #206020;
}
.start svg { width: 20px; height: 20px; }
.quick { display: flex; align-items: center; gap: 7px; width: 101px; padding-left: 12px; }
.quick svg, .task svg { width: 16px; height: 16px; }
.more { font-size: 15px; line-height: 16px; padding: 0 0 10px 3px; }
.task { display: flex; align-items: center; gap: 3px; width: 159px; height: 23px; margin-right: 1px; padding: 0 9px; border-radius: 3px; background: linear-gradient(#5c98fc, #3c80f4 20%, #3878ec 90%, #2c60d0); white-space: nowrap; }
.task.active { padding: 0 11px; background: #1c4cb4; box-shadow: inset 1px 1px 1px #103078; }
.tray { display: flex; align-items: center; gap: 5px; margin-left: auto; height: 30px; padding-right: 13px; background: linear-gradient(#1078c8 0, #18a8f4 10%, #1090e8 30%, #1090e8 85%, #1070c0); border-left: 1px solid #103c8c; }
.tray button { margin-left: -9px; }
.tray svg { width: 18px; height: 18px; }
```
